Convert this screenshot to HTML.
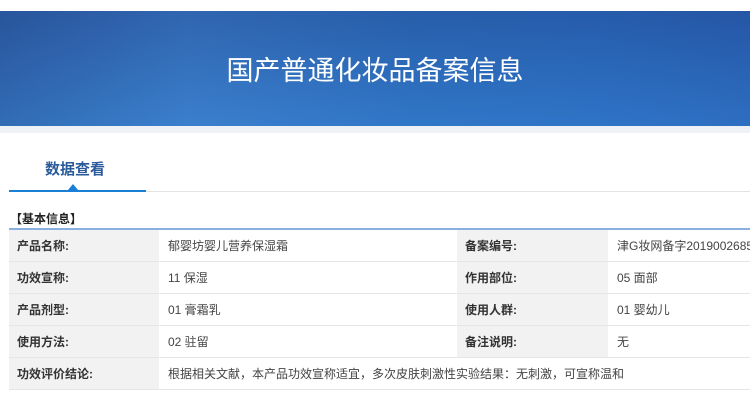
<!DOCTYPE html><html><head><meta charset="utf-8"><style>
body{margin:0;width:750px;height:419px;background:#fff;font-family:"Liberation Sans","Noto Sans CJK SC",sans-serif;overflow:hidden;position:relative}
.ban{position:absolute;left:0;top:11px;width:750px;height:115px;background:linear-gradient(90deg,#2e62a8 0%,#3a7bc8 25%,#2c70c0 55%,#2a6cc0 80%,#2964b8 100%);overflow:hidden}
.ban:before{content:"";position:absolute;left:0;top:0;right:0;bottom:0;background:linear-gradient(180deg,rgba(30,60,130,.35),rgba(60,140,220,.25))}
.ban h1{position:absolute;left:0;right:0;top:40px;margin:0;text-align:center;color:#fff;font-weight:normal;font-size:27px;font-family:"Noto Sans CJK SC",sans-serif;line-height:36px}
.gray{position:absolute;top:126px;left:0;width:750px;height:7px;background:#eef1f5}
.tab{position:absolute;left:45px;top:158px;font-size:15px;font-weight:bold;color:#2a5a9a}
.tl{position:absolute;left:9px;top:191px;width:741px;height:1px;background:#e3e3e3}
.tb{position:absolute;left:9px;top:190px;width:137px;height:2px;background:#1a7fd6}
.tri{position:absolute;left:68px;top:184px;border:5px solid transparent;border-bottom:6px solid #1a7fd6;border-top:0}
.hd{position:absolute;left:10px;top:210px;font-size:12px;font-weight:bold;color:#222}
table{position:absolute;left:9px;top:228px;width:760px;table-layout:fixed;border-collapse:collapse;border-top:2px solid #8ab0e0;font-size:12px}
td{height:31px;border-bottom:1px solid #e6e6e6;padding:0 0 0 9px;color:#444;white-space:nowrap;overflow:hidden}
td.l{background:#f2f2f2;font-weight:bold;color:#333;padding-left:8px}
</style></head><body>
<div class="ban"><h1>国产普通化妆品备案信息</h1></div>
<div class="gray"></div>
<div class="tab">数据查看</div>
<div class="tl"></div><div class="tb"></div><div class="tri"></div>
<div class="hd">【基本信息】</div>
<table>
<colgroup><col style="width:150px"><col style="width:298px"><col style="width:151px"><col style="width:161px"></colgroup>
<tr><td class="l">产品名称:</td><td>郁婴坊婴儿营养保湿霜</td><td class="l">备案编号:</td><td>津G妆网备字2019002685</td></tr>
<tr><td class="l">功效宣称:</td><td>11 保湿</td><td class="l">作用部位:</td><td>05 面部</td></tr>
<tr><td class="l">产品剂型:</td><td>01 膏霜乳</td><td class="l">使用人群:</td><td>01 婴幼儿</td></tr>
<tr><td class="l">使用方法:</td><td>02 驻留</td><td class="l">备注说明:</td><td>无</td></tr>
<tr><td class="l">功效评价结论:</td><td colspan="3">根据相关文献，本产品功效宣称适宜，多次皮肤刺激性实验结果：无刺激，可宣称温和</td></tr>
</table>
</body></html>
